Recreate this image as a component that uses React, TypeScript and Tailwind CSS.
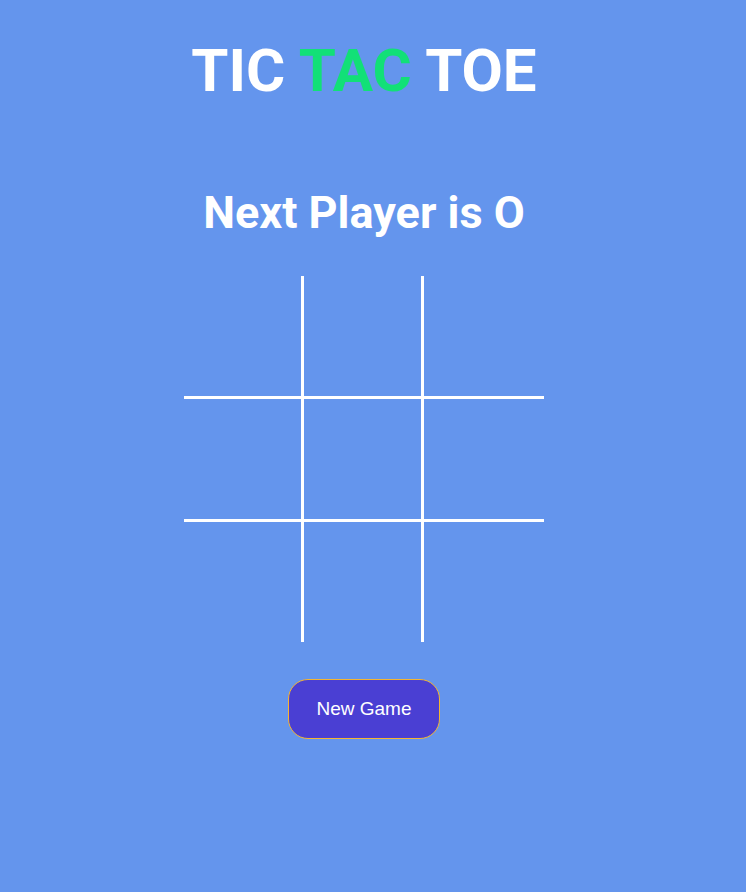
import React from "react";

const cells = [0, 1, 2, 3, 4, 5, 6, 7, 8];

const App = () => {
  return (
    <div className="min-h-[892px] w-full bg-[#6495ed]">
      <div className="flex w-[728px] flex-col items-center font-['Roboto',sans-serif] text-white">
        <h1 className="mt-[36px] text-[60px] font-bold leading-[70px]">
          TIC <span className="text-[#12e077]">TAC</span> TOE
        </h1>
        <h2 className="mt-[80px] text-[45px] font-bold leading-[53px]">
          Next Player is O
        </h2>
        <div className="mt-[37px] grid w-[360px] grid-cols-3">
          {cells.map((i) => (
            <div
              key={i}
              className={`${i < 6 ? "h-[123px] border-b-[3px]" : "h-[120px]"} ${
                i % 3 < 2 ? "border-r-[3px]" : ""
              } border-white`}
            />
          ))}
        </div>
        <button className="mt-[37px] h-[60px] w-[152px] rounded-[20px] border border-[#f4b532] bg-[#4a3fd3] font-['Liberation_Sans',sans-serif] text-[19px] text-white">
          New Game
        </button>
      </div>
    </div>
  );
};

export default App;
